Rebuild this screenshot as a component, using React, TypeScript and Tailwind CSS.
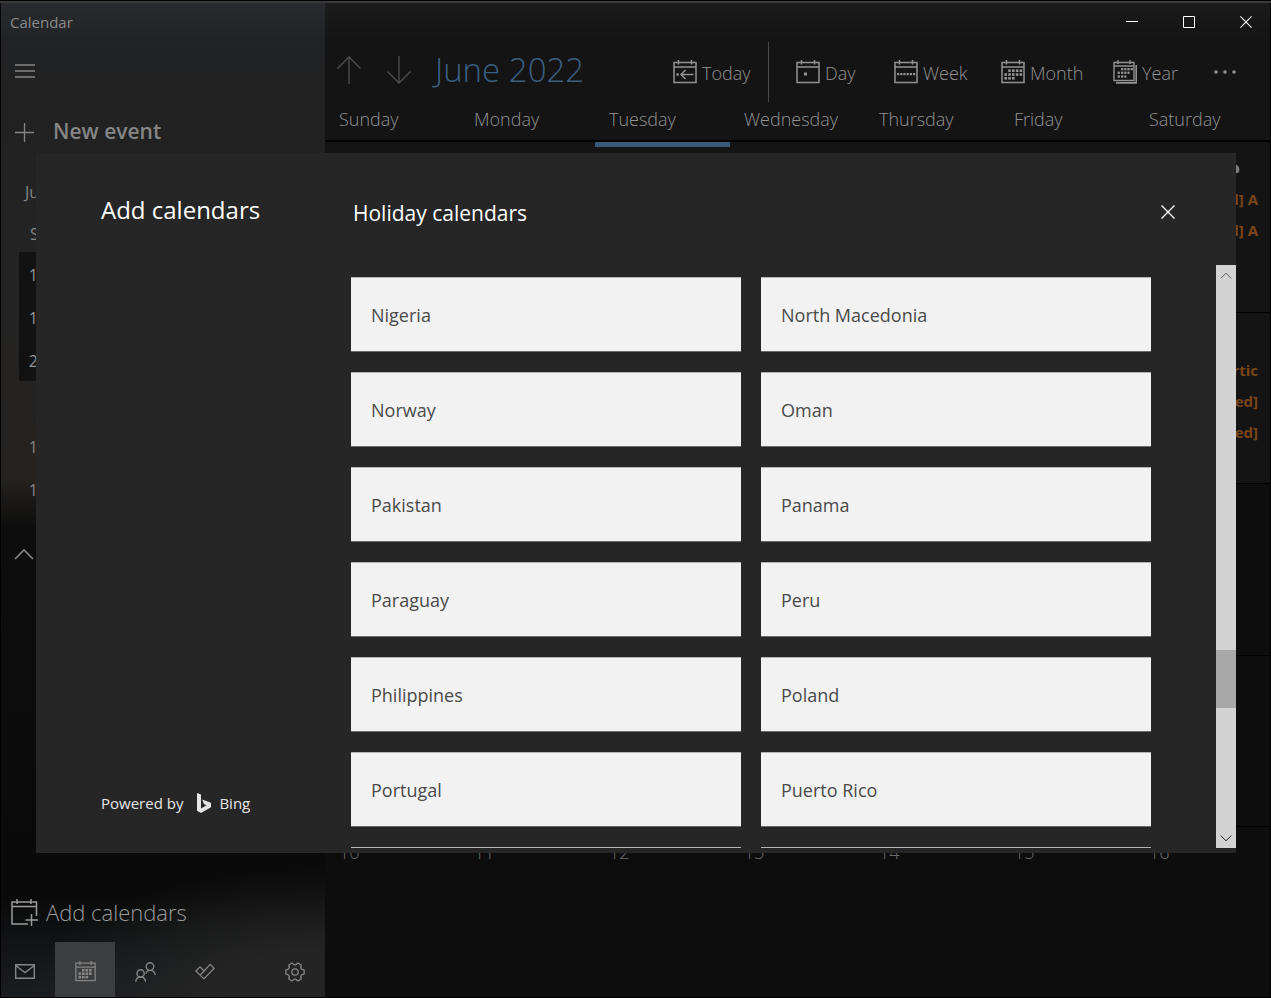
import type { ReactNode } from "react";

type IconProps = { className?: string };

const weekDays = ["Sunday", "Monday", "Tuesday", "Wednesday", "Thursday", "Friday", "Saturday"];

const countries = [
  "Nigeria",
  "North Macedonia",
  "Norway",
  "Oman",
  "Pakistan",
  "Panama",
  "Paraguay",
  "Peru",
  "Philippines",
  "Poland",
  "Portugal",
  "Puerto Rico",
];

type Week = { days: number[]; events: string[]; nextMonthFrom: number };

// nextMonthFrom: index of the first day that belongs to July
const weeks: Week[] = [
  { days: [12, 13, 14, 15, 16, 17, 18], events: ["[Featured] A", "[Featured] A"], nextMonthFrom: 7 },
  { days: [19, 20, 21, 22, 23, 24, 25], events: ["Artic", "[Featured]", "[Featured]"], nextMonthFrom: 7 },
  { days: [26, 27, 28, 29, 30, 1, 2], events: [], nextMonthFrom: 5 },
  { days: [3, 4, 5, 6, 7, 8, 9], events: [], nextMonthFrom: 0 },
  { days: [10, 11, 12, 13, 14, 15, 16], events: [], nextMonthFrom: 0 },
];

const miniWeeks = [
  { first: 12, visible: true },
  { first: 19, visible: true },
  { first: 26, visible: true },
  { first: 3, visible: false },
  { first: 10, visible: false },
  { first: 17, visible: false },
];

/* Icons */

function CalendarFrame({ size = 24, children }: { size?: number; children?: ReactNode }) {
  return (
    <svg className="shrink-0" width={size} height={size} viewBox="0 0 24 24" fill="none" stroke="currentColor" strokeWidth="1.5">
      <path d="M1 2.5H23V22.5H1ZM1 7H23M5.5 0V4.5M18.5 0V4.5" />
      {children}
    </svg>
  );
}

function Dots({ points, size = 2.6 }: { points: number[][]; size?: number }) {
  return (
    <g fill="currentColor" stroke="none">
      {points.map(([x, y]) => (
        <rect key={`${x}-${y}`} x={x} y={y} width={size} height={size} />
      ))}
    </g>
  );
}

const monthDots = [
  [7.2, 9.4], [11, 9.4], [14.8, 9.4], [18.6, 9.4],
  [3.4, 13.2], [7.2, 13.2], [11, 13.2], [14.8, 13.2], [18.6, 13.2],
  [3.4, 17], [7.2, 17], [11, 17],
];

function YearIcon() {
  return (
    <svg className="shrink-0" width="24" height="24" viewBox="0 0 24 24" fill="none" stroke="currentColor" strokeWidth="1.4">
      <path d="M1 2.5H21V20.5H1ZM1 6H21M5 0V4M17 0V4" />
      <path strokeWidth="1.6" d="M3 22.9H23.2V5" />
      <Dots
        size={2.3}
        points={[
          [8, 8], [11.2, 8], [14.4, 8], [17.6, 8],
          [4.6, 11.6], [8, 11.6], [11.2, 11.6], [14.4, 11.6],
          [4.6, 15.4], [8, 15.4], [11.2, 15.4],
        ]}
      />
    </svg>
  );
}

const views = [
  {
    label: "Day",
    width: "w-[98px]",
    icon: <CalendarFrame><Dots size={3} points={[[8, 12.5]]} /></CalendarFrame>,
  },
  {
    label: "Week",
    width: "w-[107px]",
    icon: <CalendarFrame><Dots size={2.2} points={[[3, 13], [6.2, 13], [9.4, 13], [12.6, 13], [15.8, 13], [19, 13]]} /></CalendarFrame>,
  },
  { label: "Month", width: "w-[112px]", icon: <CalendarFrame><Dots points={monthDots} /></CalendarFrame> },
  { label: "Year", width: "w-[101px]", icon: <YearIcon /> },
];

function ArrowIcon({ className }: IconProps) {
  return (
    <svg className={className} width="24" height="28" viewBox="0 0 24 28" fill="none" stroke="currentColor" strokeWidth="1.3">
      <path d="M12 28V1M.5 12.5L12 1L23.5 12.5" />
    </svg>
  );
}

function ChevronIcon({ className }: IconProps) {
  return (
    <svg className={className} viewBox="0 0 20 12" fill="none" stroke="currentColor" strokeWidth="1.6">
      <path d="M1 11L10 2L19 11" />
    </svg>
  );
}

function CloseIcon({ className }: IconProps) {
  return (
    <svg className={className} viewBox="0 0 14 14" fill="none" stroke="currentColor" strokeWidth="1.3">
      <path d="M.5 .5L13.5 13.5M13.5 .5L.5 13.5" />
    </svg>
  );
}

function MailIcon() {
  return (
    <svg width="20" height="15" fill="none" stroke="currentColor" strokeWidth="1.4">
      <path d="M.7 .7H19.3V14.3H.7ZM.7 1.5L10 8.5L19.3 1.5" />
    </svg>
  );
}

function PeopleIcon() {
  return (
    <svg width="21" height="20" fill="none" stroke="currentColor" strokeWidth="1.4">
      <circle cx="15" cy="4.6" r="3.8" />
      <path d="M10.8 11.8C11.4 9.6 13 8.4 15 8.4C17.8 8.4 19.8 10.2 20.2 13" />
      <circle cx="5.6" cy="11.4" r="3.6" />
      <path d="M.7 19.8C1 17 3 15 5.6 15C8.2 15 10.2 17 10.5 19.8" />
    </svg>
  );
}

function TodoIcon() {
  return (
    <svg width="20" height="17" fill="none" stroke="currentColor" strokeWidth="1.3">
      <path d="M.9 8L5 3.9L9.1 8L15.2 1.4L19.1 5.3L9 15.9ZM9.1 8L5 12.1" />
    </svg>
  );
}

// six teeth, alternating between the outer and the inner radius
const gearPoints = Array.from({ length: 6 }, (_, i) => i * 60)
  .flatMap((angle) => [
    [angle - 23, 7.2],
    [angle - 12, 9.4],
    [angle + 12, 9.4],
    [angle + 23, 7.2],
  ])
  .map(([deg, r]) => {
    const rad = (deg * Math.PI) / 180;
    return `${(10 + r * Math.cos(rad)).toFixed(2)},${(10 + r * Math.sin(rad)).toFixed(2)}`;
  })
  .join(" ");

function GearIcon() {
  return (
    <svg width="20" height="20" fill="none" stroke="currentColor" strokeWidth="1.3" strokeLinejoin="round">
      <polygon points={gearPoints} />
      <circle cx="10" cy="10" r="3.2" />
    </svg>
  );
}

function BingLogo() {
  return (
    <svg width="22" height="20" viewBox="0 0 24 24" fill="currentColor">
      <path d="M3.605 0L8.4 1.686v16.88l6.753-3.895-3.31-1.555-2.089-5.2 10.64 3.738v5.435L8.403 24l-4.797-2.67V0z" />
    </svg>
  );
}

function WeatherIcon() {
  return (
    <svg width="28" height="14" fill="currentColor">
      <path d="M4 13A4 4 0 0 1 4 6A7 7 0 0 1 17 6A4 4 0 0 1 24 13Z" />
    </svg>
  );
}

/* Window */

function TitleBar() {
  return (
    <div className="absolute inset-x-0 top-0 border-t border-black">
      <div className="flex h-10 items-center justify-between border-t-2 border-[#3a3a3a] bg-gradient-to-b from-white/3 to-transparent pr-[19px] pl-[10px]">
        <span className="text-[15px] text-[#8a8a8a]">Calendar</span>
        <div className="flex h-full items-center gap-[45px] text-white">
          <button aria-label="Minimize">
            <svg width="12" height="12" stroke="currentColor"><path d="M0 5.5H12" /></svg>
          </button>
          <button aria-label="Maximize">
            <svg width="12" height="12" fill="none" stroke="currentColor"><path d="M.5 .5H11.5V11.5H.5Z" /></svg>
          </button>
          <button aria-label="Close">
            <CloseIcon className="h-3 w-3" />
          </button>
        </div>
      </div>
    </div>
  );
}

function Sidebar() {
  return (
    <aside className="flex w-[325px] shrink-0 flex-col border-b border-l border-black bg-[radial-gradient(ellipse_300px_130px_at_100%_100%,#242424_35%,transparent),linear-gradient(to_bottom,#222427,#212121_10%,#242424_30%,#25221f_48%,#0d0d0d_53%,#0a0a0a_90%,#15181a_97%,#1b1d1f)] pt-[51px] text-[#858585]">
      <button aria-label="Menu" className="flex h-10 w-12 items-center justify-center">
        <svg width="20" height="14" stroke="currentColor" strokeWidth="1.3"><path d="M0 1H20M0 7H20M0 13H20" /></svg>
      </button>
      <button className="mt-[21px] flex h-10 items-center gap-[19px] pl-[14px] text-[21px] font-semibold">
        <svg width="19" height="19" stroke="currentColor" strokeWidth="1.3"><path d="M9.5 0V19M0 9.5H19" /></svg>
        New event
      </button>
      <div className="mt-5 flex h-10 items-center pl-6 text-base">June 2022</div>
      <div className="mt-[3px] flex h-[37px] items-center pl-[29px] text-base">S</div>
      <div className="flex flex-col pl-[18px]">
        {miniWeeks.map((week) => (
          <div
            key={week.first}
            className={`flex h-[43px] items-center pt-0.5 pl-2 text-base ${week.visible ? "bg-[#121212] text-[#959595]" : ""}`}
          >
            <span className="w-5 text-right">{week.first}</span>
          </div>
        ))}
      </div>
      <button aria-label="Collapse" className="mt-5 flex h-12 w-[46px] items-center justify-center">
        <ChevronIcon className="h-3 w-5" />
      </button>
      <button className="mt-auto flex h-[60px] items-center gap-2 pl-[10px] text-[22px] font-light text-[#9a9a9a]">
        <svg width="27" height="27" viewBox="0 0 27 27" fill="none" stroke="currentColor" strokeWidth="1.5">
          <path d="M17 25H1V3H25.5V17M1 7.5H25.5M6 0V5M20 0V5M20.5 15V27M14.5 21H27" />
        </svg>
        Add calendars
      </button>
      <nav className="flex h-[55px]">
        <button aria-label="Mail" className="flex w-[54px] items-center justify-center pr-1.5 pt-1"><MailIcon /></button>
        <button aria-label="Calendar" className="flex w-[60px] items-center justify-center bg-[#3c3d3e] pt-1">
          <CalendarFrame size={21}>
            <Dots
              size={3}
              points={[[8, 9], [12, 9], [16, 9], [4, 13], [8, 13], [12, 13], [16, 13], [4, 17], [8, 17], [12, 17]]}
            />
          </CalendarFrame>
        </button>
        <button aria-label="People" className="flex w-[60px] items-center justify-center pt-1"><PeopleIcon /></button>
        <button aria-label="To do" className="flex w-[60px] items-center justify-center pt-1"><TodoIcon /></button>
        <button aria-label="Settings" className="ml-auto flex w-[60px] items-center justify-center pt-1"><GearIcon /></button>
      </nav>
    </aside>
  );
}

function DayCell({ day, column, row, week }: { day: number; column: number; row: number; week: Week }) {
  const isToday = row === 0 && column === 2;
  const isLast = column === 6;

  return (
    <div
      className={`min-w-0 border-t-[5px] pt-1.5 pl-[14px] ${isToday ? "border-[#37597a]" : "border-transparent"} ${
        column >= week.nextMonthFrom ? "bg-[#0d0d0d] text-[#6c6c6c]" : ""
      }`}
    >
      <div className="flex h-7 items-center justify-between pr-7 text-lg font-light">
        {day}
        {row === 0 && isLast && <WeatherIcon />}
      </div>
      {isLast && (
        <ul className="flex flex-col items-end pt-[3px] pr-3 text-[15px] font-bold text-[#7a4618]">
          {week.events.map((event, i) => (
            <li key={i} className="flex h-[31px] items-center">{event}</li>
          ))}
        </ul>
      )}
    </div>
  );
}

function MonthView() {
  return (
    <main className="flex min-w-0 flex-1 flex-col border-r border-black bg-[#141414] pt-10 text-[#7c7c7c]">
      <header className="flex h-16 items-center justify-between pl-3">
        <div className="flex items-center pb-1">
          <button aria-label="Previous month" className="text-[#4e4e4e]"><ArrowIcon /></button>
          <button aria-label="Next month" className="ml-[26px] text-[#4e4e4e]"><ArrowIcon className="rotate-180" /></button>
          <h1 className="ml-6 text-[33px] leading-[48px] font-light text-[#3a5f80]">June 2022</h1>
        </div>
        <div className="flex items-center pr-[34px] text-lg font-light text-[#929292]">
          <button className="flex w-[95px] items-center gap-[5px]">
            <CalendarFrame>
              <path d="M7.5 14.5H20.5M12.5 10L8 14.5L12.5 19" />
              <Dots size={2.4} points={[[3.4, 13.3]]} />
            </CalendarFrame>
            <span className="pt-0.5">Today</span>
          </button>
          <div className="mr-[27px] h-[60px] w-px bg-[#4a4a4a]" />
          {views.map((view) => (
            <button key={view.label} className={`flex items-center gap-[5px] ${view.width}`}>
              {view.icon}
              <span className="pt-0.5">{view.label}</span>
            </button>
          ))}
          <button aria-label="More">
            <svg width="22" height="4" fill="currentColor">
              <circle cx="2" cy="2" r="1.8" />
              <circle cx="11" cy="2" r="1.8" />
              <circle cx="20" cy="2" r="1.8" />
            </svg>
          </button>
        </div>
      </header>
      <div className="grid h-[38px] grid-cols-7 border-b-2 border-black pt-px text-lg font-light text-[#929292]">
        {weekDays.map((day) => (
          <div key={day} className="pl-[14px]">{day}</div>
        ))}
      </div>
      <div className="grid flex-1 grid-rows-5">
        {weeks.map((week, row) => (
          <div key={week.days[0]} className="grid grid-cols-7 border-b border-black">
            {week.days.map((day, column) => (
              <DayCell key={day} day={day} column={column} row={row} week={week} />
            ))}
          </div>
        ))}
      </div>
    </main>
  );
}

function ScrollTrack() {
  return (
    <div className="flex w-5 shrink-0 flex-col bg-[#d3d3d3]">
      <button aria-label="Scroll up" className="flex h-5 items-center justify-center text-[#555]">
        <ChevronIcon className="h-[7px] w-3" />
      </button>
      <div className="flex-[73]" />
      <div className="h-[58px] bg-[#a8a8a8]" />
      <div className="flex-[24]" />
      <button aria-label="Scroll down" className="flex h-5 items-center justify-center text-[#111]">
        <ChevronIcon className="h-[7px] w-3 rotate-180" />
      </button>
    </div>
  );
}

const cardClass =
  "h-[75px] w-full border-t border-b border-t-[#b4b4b4] border-b-[#6a6a6a] bg-[#f2f2f2] px-5 text-left text-lg text-[#4a4a4a]";

function AddCalendarsDialog() {
  return (
    <div className="absolute inset-0 flex pt-[153px] pr-[35px] pb-[145px] pl-9">
      <section role="dialog" aria-label="Add calendars" className="flex min-h-0 flex-1 bg-[#262626]">
        <div className="flex w-[315px] shrink-0 flex-col justify-between pt-[41px] pb-[39px] pl-[65px] text-white">
          <h2 className="text-2xl">Add calendars</h2>
          <p className="flex items-center text-[15px] text-[#e6e6e6]">
            Powered by
            <span className="mr-1 ml-[10px]"><BingLogo /></span>
            Bing
          </p>
        </div>
        <div className="flex min-w-0 flex-1 flex-col pb-[5px]">
          <div className="flex h-28 shrink-0 items-center justify-between pt-1.5 pr-[61px] pl-0.5 text-white">
            <h3 className="pt-[3px] text-[21px]">Holiday calendars</h3>
            <button aria-label="Close dialog">
              <CloseIcon className="h-[14px] w-[14px]" />
            </button>
          </div>
          <div className="flex min-h-0 flex-1">
            <ul className="grid min-w-0 flex-1 auto-rows-[75px] grid-cols-2 gap-5 overflow-hidden pt-3 pr-[65px]">
              {countries.map((country) => (
                <li key={country}>
                  <button className={cardClass}>{country}</button>
                </li>
              ))}
              <li><button aria-label="Qatar" className={cardClass} /></li>
              <li><button aria-label="Romania" className={cardClass} /></li>
            </ul>
            <ScrollTrack />
          </div>
        </div>
      </section>
    </div>
  );
}

export default function App() {
  return (
    <div className="relative flex min-h-screen bg-black font-['Open_Sans',sans-serif]">
      <Sidebar />
      <MonthView />
      <TitleBar />
      <AddCalendarsDialog />
    </div>
  );
}
